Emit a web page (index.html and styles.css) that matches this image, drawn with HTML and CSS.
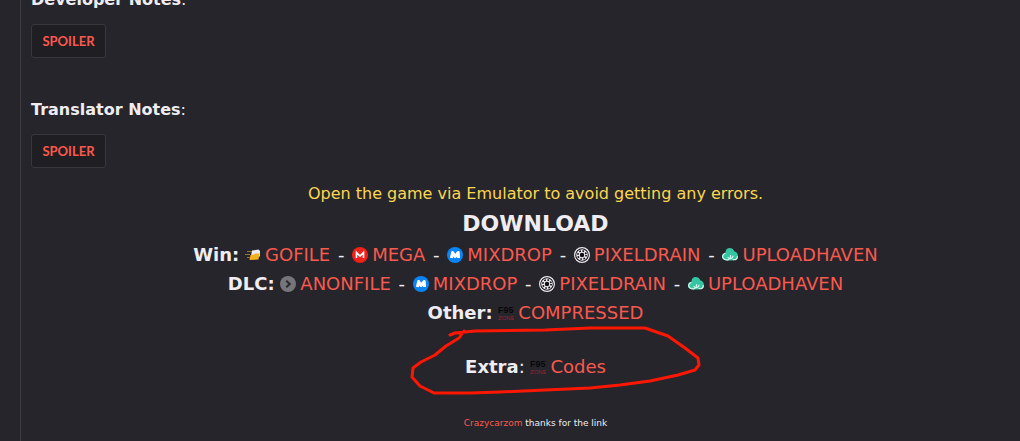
FILE: index.html
```html
<!DOCTYPE html>
<html lang="en">
<head>
<meta charset="utf-8">
<title>Download notes</title>
<link rel="stylesheet" href="styles.css">
</head>
<body>
<svg class="sprites" aria-hidden="true">
  <symbol id="gofile" viewBox="0 0 16 16">
    <path d="M7 3.500 13.500 2.500 15 4V9.500L6 9Z" fill="#eeeaf0"/>
    <path d="M5.500 8 9 7.500 10 6.500 14.500 6.500 13.500 12.500 4.500 13Z" fill="#f2b01e"/>
    <path d="M2 4.500H7M0 7.500H5M2 10.500H5" stroke="#8f7440" stroke-width="1"/>
  </symbol>
  <symbol id="mega" viewBox="0 0 16 16">
    <circle cx="8" cy="8" r="8" fill="#f0201a"/>
    <path d="M4.500 11V5.500L8 9 11.500 5.500V11" fill="none" stroke="#fff" stroke-width="1.600"/>
  </symbol>
  <symbol id="mixdrop" viewBox="0 0 16 16">
    <circle cx="8" cy="8" r="8" fill="#0b84f5"/>
    <path d="M4.400 11 5.600 5.500 8 9.500 11.200 5.500 11.500 11" fill="none" stroke="#fff" stroke-width="3" stroke-linejoin="round"/>
  </symbol>
  <symbol id="pixeldrain" viewBox="0 0 16 16">
    <circle cx="8" cy="8" r="7.400" fill="#101014" stroke="#eeeaf0" stroke-width="1.200"/>
    <circle cx="8" cy="8" r="4" fill="none" stroke="#eeeaf0" stroke-width="3.600"/>
    <circle cx="8" cy="8" r="4.100" fill="none" stroke="#101014" stroke-width="1.700" stroke-dasharray="1.600 1.620"/>
    <circle cx="8" cy="8" r="1.700" fill="#101014"/>
  </symbol>
  <symbol id="uploadhaven" viewBox="0 0 16 16">
    <path d="M3.500 5.500C3.500 0 10.500-.500 12.500 4.500 16 5 17 9.500 14.500 12 12.500 14 4 14 1.500 12.500-1 10 0 6 3.500 5.500Z" fill="#35c5a2"/>
    <path d="M3 6.500C0 7.500-.200 11 2.500 12.300 5.500 14 9 11.500 8.500 8.500M6 10.500C8 13 11 11 11 9M11 12.500C13.500 13.300 15.500 12 15.300 9.500" fill="none" stroke="#d8f8ee" stroke-width="1.200" stroke-linecap="round"/>
  </symbol>
  <symbol id="anonfile" viewBox="0 0 16 16">
    <circle cx="8" cy="8" r="8" fill="#76757a"/>
    <path d="M6.300 4.800 9.700 8 6.300 11.200" fill="none" stroke="#29282e" stroke-width="2"/>
  </symbol>
  <symbol id="f95" viewBox="0 0 16 16">
    <text class="logo-top" x="0" y="8">F95</text>
    <text class="logo-bottom" x="0" y="15">ZONE</text>
  </symbol>
</svg>
<main class="post">
  <p class="note"><b>Developer Notes</b>:</p>
  <button class="spoiler" type="button">SPOILER</button>
  <p class="note"><b>Translator Notes</b>:</p>
  <button class="spoiler" type="button">SPOILER</button>
  <section class="downloads">
    <p class="warning">Open the game via Emulator to avoid getting any errors.</p>
    <h2 class="title">DOWNLOAD</h2>
    <p class="row"><b>Win:</b> <a href="#gofile"><svg class="icon"><use href="#gofile"/></svg>GOFILE</a> <span class="dash">-</span> <a href="#mega"><svg class="icon"><use href="#mega"/></svg>MEGA</a> <span class="dash">-</span> <a href="#mixdrop"><svg class="icon"><use href="#mixdrop"/></svg>MIXDROP</a> <span class="dash">-</span> <a href="#pixeldrain"><svg class="icon"><use href="#pixeldrain"/></svg>PIXELDRAIN</a> <span class="dash">-</span> <a href="#uploadhaven"><svg class="icon"><use href="#uploadhaven"/></svg>UPLOADHAVEN</a></p>
    <p class="row"><b>DLC:</b> <a href="#anonfile"><svg class="icon"><use href="#anonfile"/></svg>ANONFILE</a> <span class="dash">-</span> <a href="#mixdrop"><svg class="icon"><use href="#mixdrop"/></svg>MIXDROP</a> <span class="dash">-</span> <a href="#pixeldrain"><svg class="icon"><use href="#pixeldrain"/></svg>PIXELDRAIN</a> <span class="dash">-</span> <a href="#uploadhaven"><svg class="icon"><use href="#uploadhaven"/></svg>UPLOADHAVEN</a></p>
    <p class="row"><b>Other:</b> <a href="#f95"><svg class="icon"><use href="#f95"/></svg>COMPRESSED</a></p>
    <div class="extra">
      <p class="row"><b>Extra</b>: <a href="#f95"><svg class="icon"><use href="#f95"/></svg>Codes</a></p>
      <svg class="marker" viewBox="410 324 292 72" aria-hidden="true">
        <path d="M450 335 455 333 475 331 545 330 590 328 645 328 668 336 685 348 698 358 699 365 695 370 678 375 650 381 620 385 590 388 545 390 500 392 470 393 434 393 420 386 412 377 413 368 421 362 435 355 446 346 459 338 464 331"/>
      </svg>
    </div>
    <p class="credit"><a href="#crazycarzom">Crazycarzom</a> thanks for the link</p>
  </section>
</main>
</body>
</html>
```
FILE: styles.css
```css
body {
  margin: 0;
  background: #26252b;
  color: #efedf2;
  font: 16px/24px "DejaVu Sans", Verdana, sans-serif;
  overflow: hidden;
}
p, h2 { margin: 0; }
a { color: #f9594e; text-decoration: none; }
.sprites { position: absolute; width: 0; height: 0; }
.post {
  box-sizing: border-box;
  min-height: calc(100vh + 12px);
  margin: -12px 0 0 20px;
  padding-left: 10px;
  border-left: 1px solid #3d3c42;
}
.note { padding-bottom: 12px; }
.spoiler {
  display: block;
  min-width: 75px;
  height: 34px;
  margin-bottom: 40px;
  padding: 0 9px;
  border: 1px solid #38373d;
  border-radius: 3px;
  background: #1f1e23;
  color: #f9594e;
  font: bold 13px/20px Lato, sans-serif;
}
.downloads {
  margin-top: -27px;
  padding-left: 20px;
  text-align: center;
}
.warning { color: #fbd650; line-height: 26px; }
.title { font-size: 22px; line-height: 33px; }
.row { font-size: 18px; line-height: 29px; }
.dash { margin: 0 2px; }
.icon {
  width: 16px;
  height: 16px;
  margin-right: 4px;
  vertical-align: -2px;
}
.logo-top { fill: #08080a; font: bold 9px "Liberation Sans", sans-serif; }
.logo-bottom { fill: #98233a; font: 6px "Liberation Sans", sans-serif; }
.extra { position: relative; padding: 25px 0 34px; }
.marker {
  position: absolute;
  top: -3px;
  left: calc(50% - 126px);
  width: 292px;
  height: 72px;
  pointer-events: none;
}
.marker path {
  fill: none;
  stroke: #fc1703;
  stroke-width: 3;
  stroke-linecap: round;
  stroke-linejoin: round;
}
.credit { font-size: 9px; line-height: 16px; }
```
